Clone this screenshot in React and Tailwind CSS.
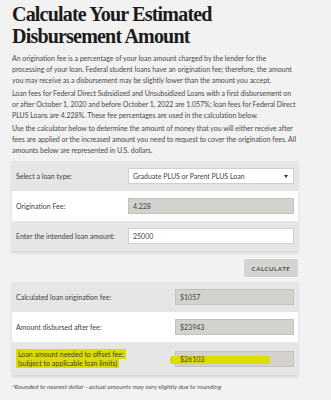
import React from "react";

const sans = { fontFamily: "Lato, 'Open Sans', sans-serif" };

function Row({ label, bg, h, inputW, children }) {
  return (
    <div className={`flex items-center px-[4px] ${bg} ${h}`}>
      <div className="flex-1 text-[7px] leading-[9px] text-[#3f3f3f]">{label}</div>
      <div className={inputW}>{children}</div>
    </div>
  );
}

function GrayInput({ value, hl }) {
  return (
    <div className="relative h-[16px] border border-[#c3c1bd] bg-[#d4d2cf] pl-[4px] text-[7px] leading-[14px] text-[#444]">
      {hl && (
        <span className="absolute left-[-6px] top-[4px] h-[8px] w-[100px] rounded-[3px] bg-[#dcdc00]" />
      )}
      <span className="relative">{value}</span>
    </div>
  );
}

export default function App() {
  return (
    <div className="min-h-[400px] w-[331px] bg-[#f2f2f2]" style={sans}>
      <div className="w-[298px] pl-[12px] pt-[3px]">
        <h1 className="font-['Liberation_Serif',serif] text-[20px] font-bold leading-[22px] tracking-[-0.8px] text-[#1a1a1a]">
          Calculate Your Estimated
          <br />
          Disbursement Amount
        </h1>
        <div className="mt-[6px] text-[7px] leading-[11px] tracking-[-0.03px] text-[#4a4a4a]">
          <p>
            An origination fee is a percentage of your loan amount charged by the lender for the processing of your loan. Federal student loans have an origination fee; therefore, the amount you may receive as a disbursement may be slightly lower than the amount you accept.
          </p>
          <p className="mt-[2px]">
            Loan fees for Federal Direct Subsidized and Unsubsidized Loans with a first disbursement on or after October 1, 2020 and before October 1, 2022 are 1.057%; loan fees for Federal Direct PLUS Loans are 4.228%. These fee percentages are used in the calculation below.
          </p>
          <p className="mt-[2px]">
            Use the calculator below to determine the amount of money that you will either receive after fees are applied or the increased amount you need to request to cover the origination fees. All amounts below are represented in U.S. dollars.
          </p>
        </div>

        <div className="mt-[5px] shadow-[0_2px_3px_rgba(0,0,0,0.12)]">
          <Row label="Select a loan type:" bg="bg-[#e6e6e6]" h="h-[30px]" inputW="w-[166px]">
            <div className="flex h-[16px] items-center justify-between border border-[#cfcfcf] bg-white pl-[4px] pr-[5px] text-[7px] text-[#444]">
              <span>Graduate PLUS or Parent PLUS Loan</span>
              <svg width="4" height="3" viewBox="0 0 4 3">
                <path d="M0 0 L4 0 L2 3 Z" fill="#333" />
              </svg>
            </div>
          </Row>
          <Row label="Origination Fee:" bg="bg-white" h="h-[30px]" inputW="w-[166px]">
            <GrayInput value="4.228" />
          </Row>
          <Row label="Enter the intended loan amount:" bg="bg-[#e6e6e6]" h="h-[30px]" inputW="w-[166px]">
            <div className="h-[16px] border border-[#cfcfcf] bg-white pl-[4px] text-[7px] leading-[14px] text-[#444]">
              25000
            </div>
          </Row>
        </div>

        <div className="mt-[8px] flex justify-end">
          <button className="h-[18px] w-[54px] bg-[#d6d4d1] text-[6px] font-bold tracking-[0.6px] text-[#4a4a4a]">
            CALCULATE
          </button>
        </div>

        <div className="mt-[5px] shadow-[0_2px_3px_rgba(0,0,0,0.12)]">
          <Row label="Calculated loan origination fee:" bg="bg-[#e6e6e6]" h="h-[30px]" inputW="w-[119px]">
            <GrayInput value="$1057" />
          </Row>
          <Row label="Amount disbursed after fee:" bg="bg-white" h="h-[30px]" inputW="w-[119px]">
            <GrayInput value="$23943" />
          </Row>
          <Row
            label={
              <span className="ml-[-3px] pl-[3px]">
                <span className="bg-[#dcdc00] box-decoration-clone px-[2px] py-[1px]">
                  Loan amount needed to offset fee:
                </span>
                <br />
                <span className="bg-[#dcdc00] box-decoration-clone px-[2px] py-[1px]">
                  (subject to applicable loan limits)
                </span>
              </span>
            }
            bg="bg-[#e6e6e6]"
            h="h-[33px]"
            inputW="w-[119px]"
          >
            <GrayInput value="$26103" hl />
          </Row>
        </div>

        <p className="mt-[7px] text-[6.5px] italic text-[#555]">
          *Rounded to nearest dollar - actual amounts may vary slightly due to rounding
        </p>
      </div>
    </div>
  );
}
